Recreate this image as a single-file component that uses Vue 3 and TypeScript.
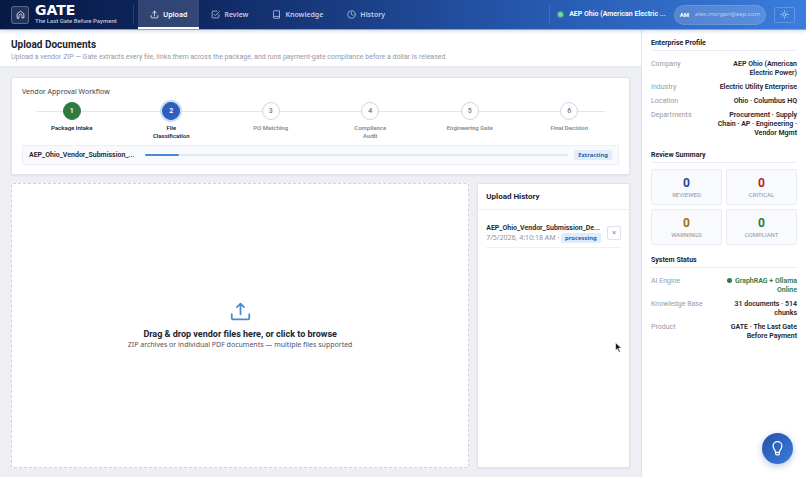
<script setup lang="ts">
import { ref } from 'vue'

interface Step { label: string; state: 'done' | 'active' | 'todo' }
interface Row { label: string; value: string; online?: boolean }

const steps: Step[] = [
  { label: 'Package Intake', state: 'done' },
  { label: 'File\nClassification', state: 'active' },
  { label: 'PO Matching', state: 'todo' },
  { label: 'Compliance\nAudit', state: 'todo' },
  { label: 'Engineering Gate', state: 'todo' },
  { label: 'Final Decision', state: 'todo' },
]

const tabs = ['Upload', 'Review', 'Knowledge', 'History']
const activeTab = ref('Upload')
const progress = ref(8)

const profile: Row[] = [
  { label: 'Company', value: 'AEP Ohio (American Electric Power)' },
  { label: 'Industry', value: 'Electric Utility Enterprise' },
  { label: 'Location', value: 'Ohio · Columbus HQ' },
  { label: 'Departments', value: 'Procurement · Supply Chain · AP · Engineering · Vendor Mgmt' },
]

const status: Row[] = [
  { label: 'AI Engine', value: 'GraphRAG + Ollama Online', online: true },
  { label: 'Knowledge Base', value: '31 documents · 514 chunks' },
  { label: 'Product', value: 'GATE · The Last Gate Before Payment' },
]

const summary = [
  { label: 'Reviewed', value: 0, tone: 'blue' },
  { label: 'Critical', value: 0, tone: 'red' },
  { label: 'Warnings', value: 0, tone: 'amber' },
  { label: 'Compliant', value: 0, tone: 'green' },
]
</script>

<template>
  <div class="app">
    <header class="topbar">
      <a class="brand" href="#">
        <span class="brand-mark">
          <svg viewBox="0 0 24 24" class="icon icon-home"><path d="M3 21V10L12 3l9 7v11h-5v-6a4 4 0 0 0-8 0v6z" /></svg>
        </span>
        <span class="brand-text">
          <span class="brand-name">GATE</span>
          <span class="brand-tag">The Last Gate Before Payment</span>
        </span>
      </a>
      <nav class="tabs" aria-label="Main">
        <button
          v-for="tab in tabs"
          :key="tab"
          type="button"
          class="tab"
          :class="{ active: tab === activeTab }"
          @click="activeTab = tab"
        >
          <svg viewBox="0 0 24 24" class="icon">
            <path v-if="tab === 'Upload'" d="M12 16V3M7 8l5-5 5 5M3 15v4a2 2 0 0 0 2 2h14a2 2 0 0 0 2-2v-4" />
            <path v-else-if="tab === 'Review'" d="M8 11l4 4L22 4M21 12v7a2 2 0 0 1-2 2H5a2 2 0 0 1-2-2V5a2 2 0 0 1 2-2h11" />
            <path v-else-if="tab === 'Knowledge'" d="M4 19V4a2 2 0 0 1 2-2h14v20H6a2 2 0 0 1-2-3a2 2 0 0 1 2-2h14" />
            <g v-else><circle cx="12" cy="12" r="10" /><path d="M12 6v6l4 2" /></g>
          </svg>
          {{ tab }}
        </button>
      </nav>
      <div class="account">
        <span class="org"><i class="dot"></i><span class="org-name">AEP Ohio (American Electric ...</span></span>
        <span class="user"><b class="initials">AM</b><span class="email">alex.morgan@aep.com</span></span>
        <button type="button" class="theme" aria-label="Toggle theme">
          <svg viewBox="0 0 24 24" class="icon"><circle cx="12" cy="12" r="4" /><path d="M12 2v2M12 20v2M2 12h2M20 12h2M5 5l1 1M18 18l1 1M5 19l1-1M18 6l1-1" /></svg>
        </button>
      </div>
    </header>

    <div class="body">
      <main class="main">
        <div class="page-head">
          <h1>Upload Documents</h1>
          <p>Upload a vendor ZIP — Gate extracts every file, links them across the package, and runs payment-gate compliance before a dollar is released</p>
        </div>

        <div class="content">
          <section class="card workflow">
            <h2>Vendor Approval Workflow</h2>
            <ol class="steps">
              <li v-for="(step, i) in steps" :key="step.label" class="step" :class="step.state">
                <span class="num">{{ i + 1 }}</span>
                <span class="step-label">{{ step.label }}</span>
              </li>
            </ol>
            <div class="job">
              <span class="job-name">AEP_Ohio_Vendor_Submission_...</span>
              <div class="track" role="progressbar" aria-label="Extraction" :aria-valuenow="progress">
                <div class="fill" :style="{ width: progress + '%' }"></div>
              </div>
              <span class="badge">Extracting</span>
            </div>
          </section>

          <div class="columns">
            <button type="button" class="dropzone">
              <svg viewBox="0 0 24 24" class="icon icon-drop"><path d="M12 15V3M8 7l4-4 4 4M2 15v4a2 2 0 0 0 2 2h16a2 2 0 0 0 2-2v-4" /></svg>
              <strong>Drag &amp; drop vendor files here, or click to browse</strong>
              <span>ZIP archives or individual PDF documents — multiple files supported</span>
            </button>

            <section class="card history">
              <h2>Upload History</h2>
              <div class="history-list">
                <div class="entry">
                  <div class="entry-text">
                    <div class="entry-name">AEP_Ohio_Vendor_Submission_De...</div>
                    <div class="entry-meta">7/5/2026, 4:10:18 AM · <span class="badge">processing</span></div>
                  </div>
                  <button type="button" class="remove" aria-label="Remove">×</button>
                </div>
              </div>
            </section>
          </div>
        </div>
      </main>

      <aside class="side">
        <section>
          <h3>Enterprise Profile</h3>
          <dl>
            <div v-for="row in profile" :key="row.label" class="row"><dt>{{ row.label }}</dt><dd>{{ row.value }}</dd></div>
          </dl>
        </section>
        <section>
          <h3>Review Summary</h3>
          <div class="stats">
            <div v-for="s in summary" :key="s.label" class="stat">
              <b :class="s.tone">{{ s.value }}</b>
              <span>{{ s.label }}</span>
            </div>
          </div>
        </section>
        <section>
          <h3>System Status</h3>
          <dl>
            <div v-for="row in status" :key="row.label" class="row">
              <dt>{{ row.label }}</dt>
              <dd :class="{ online: row.online }"><i v-if="row.online" class="led"></i>{{ row.value }}</dd>
            </div>
          </dl>
        </section>
      </aside>
    </div>

    <button type="button" class="assistant" aria-label="Open assistant">
      <svg viewBox="0 0 24 24" class="icon"><path d="M9 18c0-3-4-5-4-10a7 7 0 0 1 14 0c0 5-4 7-4 10zM9 18v2a2 2 0 0 0 2 2h2a2 2 0 0 0 2-2v-2" /></svg>
    </button>
    <svg class="pointer" viewBox="0 0 12 18" aria-hidden="true"><path d="M1 1v13l3-3 3 6 2-1-3-6h5z" /></svg>
  </div>
</template>

<style>
body {
  margin: 0;
}
</style>

<style scoped>
* {
  box-sizing: border-box;
}
.app {
  display: flex;
  flex-direction: column;
  min-height: 100vh;
  font-family: Roboto, "Noto Sans", sans-serif;
  font-size: 7px;
  line-height: 9px;
  color: #20242e;
  background: #eeeff5;
}
h1, h2, h3, p, ol, dl, dd {
  margin: 0;
  padding: 0;
}
button {
  font: inherit;
  color: inherit;
  padding: 0;
  cursor: pointer;
}
.tab,
.email,
.badge,
.workflow h2,
.dropzone span,
.entry-meta {
  font-family: "Noto Sans", sans-serif;
}
.icon {
  width: 9px;
  height: 9px;
  flex: none;
  fill: none;
  stroke: currentColor;
  stroke-width: 2;
  stroke-linecap: round;
  stroke-linejoin: round;
}

.topbar {
  position: relative;
  display: flex;
  height: 30px;
  flex: none;
  color: #fff;
  background: linear-gradient(90deg, #071a45 0%, #102862 25%, #2454a8 62%, #3b7ddd 100%);
  border-bottom: 1px solid #77a6ec;
  box-shadow: 0 1px 4px #1a3c8033;
}
.brand {
  display: flex;
  align-items: center;
  gap: 6px;
  width: 134px;
  margin-right: 4px;
  padding-left: 11px;
  color: inherit;
  text-decoration: none;
  background: linear-gradient(#ffffff22, #ffffff22) right center / 1px 20px no-repeat;
}
.brand-mark {
  display: grid;
  place-items: center;
  width: 18px;
  height: 18px;
  border: 1px solid #ffffff44;
  border-radius: 3px;
  background: #ffffff1c;
}
.brand-text {
  display: flex;
  flex-direction: column;
}
.brand-name {
  font: 900 14px/13px "DejaVu Sans", sans-serif;
}
.brand-tag {
  font-size: 6px;
  line-height: 8px;
  font-weight: 500;
  color: #bdc8df;
  white-space: nowrap;
}
.tabs {
  display: flex;
}
.tab {
  display: flex;
  align-items: center;
  gap: 4px;
  padding: 1px 12px 0;
  border: 0;
  border-bottom: 2px solid transparent;
  background: none;
  font-weight: 600;
  color: #c0cce8;
}
.tab.active {
  color: #fff;
  background: #ffffff26;
  border-bottom-color: #fff;
}
.account {
  display: flex;
  align-items: center;
  gap: 8px;
  margin-left: auto;
  padding-right: 11px;
}
.org {
  display: flex;
  align-items: center;
  gap: 6px;
  height: 20px;
  padding-left: 8px;
  border-left: 1px solid #ffffff1c;
  font-weight: 600;
}
.org-name {
  white-space: nowrap;
}
.dot {
  width: 5px;
  height: 5px;
  border-radius: 50%;
  background: #6bdd91;
  box-shadow: 0 0 3px #6bdd91;
}
.user {
  display: flex;
  align-items: center;
  gap: 6px;
  height: 20px;
  padding: 0 5px;
  border: 1px solid #ffffff1c;
  border-radius: 10px;
  background: #ffffff2b;
}
.initials {
  font-size: 6px;
}
.email {
  font-size: 6px;
  color: #b9d0f4;
}
.theme {
  display: grid;
  place-items: center;
  width: 21px;
  height: 16px;
  border: 1px solid #ffffff33;
  border-radius: 2px;
  background: none;
}
.theme .icon {
  color: #c4dafa;
}

.body {
  display: flex;
  flex: 1;
}
.main {
  display: flex;
  flex-direction: column;
  flex: 1;
  min-width: 0;
}
.page-head {
  padding: 9px 11px 4px;
  background: #fff;
  border-bottom: 1px solid #e6e8ef;
}
.page-head h1 {
  margin-bottom: 1px;
  font-size: 10px;
  line-height: 12px;
  font-weight: 700;
}
.page-head p {
  line-height: 10px;
  color: #9498a4;
}
.content {
  display: flex;
  flex-direction: column;
  gap: 8px;
  flex: 1;
  padding: 10px 11px 9px;
}
.card {
  background: #fff;
  border: 1px solid #e0e3eb;
  border-radius: 2px;
  box-shadow: 0 1px 2px #20306012;
}
.workflow {
  padding: 8px 10px 9px;
}
.workflow h2 {
  font-size: 7px;
  line-height: 12px;
  font-weight: 400;
  color: #3c404b;
}
.steps {
  display: flex;
  margin-top: 4px;
  list-style: none;
  background: linear-gradient(#e1e5ec, #e1e5ec) center 9px / calc(100% - 28px) 1px no-repeat;
}
.step {
  display: flex;
  flex-direction: column;
  align-items: center;
  gap: 4px;
  flex: 1;
  min-height: 40px;
}
.num {
  display: grid;
  place-items: center;
  width: 18px;
  height: 18px;
  border: 1px solid #d3d6de;
  border-radius: 50%;
  background: #fff;
  font-weight: 600;
  color: #7c808b;
}
.step-label {
  font-size: 6px;
  line-height: 8px;
  font-weight: 600;
  text-align: center;
  white-space: pre-line;
  color: #858994;
}
.done .num {
  color: #fff;
  background: #2f7a40;
  border-color: #2f7a40;
}
.active .num {
  color: #fff;
  background: #2b5fbc;
  border-color: #2b5fbc;
  box-shadow: 0 0 0 2px #c7dcf7;
}
.done .step-label,
.active .step-label {
  color: #22262f;
}
.job {
  display: flex;
  align-items: center;
  gap: 6px;
  height: 20px;
  margin-top: 3px;
  padding: 0 6px;
  border: 1px solid #eceff5;
  border-radius: 2px;
  background: #f8fafd;
}
.job-name {
  min-width: 106px;
  margin-right: 4px;
  white-space: nowrap;
  font-weight: 600;
}
.track {
  flex: 1;
  height: 2px;
  border-radius: 1px;
  background: #e3e9f1;
}
.fill {
  height: 100%;
  border-radius: 1px;
  background: #4a8ad4;
}
.badge {
  padding: 1px 4px;
  border-radius: 2px;
  background: #e0ecfb;
  font-size: 6px;
  line-height: 8px;
  font-weight: 600;
  color: #234b8b;
}

.columns {
  display: grid;
  grid-template-columns: minmax(0, 3fr) minmax(0, 1fr);
  gap: 8px;
  flex: 1;
}
.dropzone {
  display: flex;
  flex-direction: column;
  align-items: center;
  justify-content: center;
  border: 1px dashed #cdd1da;
  border-radius: 2px;
  background: #fff;
}
.icon-drop {
  width: 21px;
  height: 21px;
  margin-bottom: 7px;
  color: #4a8ad0;
}
.dropzone strong {
  font-size: 9px;
  line-height: 11px;
  font-weight: 700;
}
.dropzone span {
  line-height: 10px;
  color: #50545f;
}
.history h2 {
  padding: 7px 8px;
  border-bottom: 1px solid #eef0f5;
  font-size: 8px;
  line-height: 11px;
  font-weight: 700;
}
.history-list {
  padding: 8px;
}
.entry {
  display: flex;
  align-items: center;
  gap: 7px;
  padding: 5px 0 4px;
  border-bottom: 1px solid #eff1f5;
}
.entry-text {
  flex: 1;
  min-width: 0;
}
.entry-name {
  white-space: nowrap;
  line-height: 10px;
  font-weight: 600;
}
.entry-meta {
  line-height: 10px;
  white-space: nowrap;
  color: #8d919c;
}
.remove {
  width: 14px;
  height: 14px;
  border: 1px solid #dfe2e8;
  border-radius: 2px;
  background: #fff;
  color: #7c808b;
}

.side {
  display: flex;
  flex-direction: column;
  gap: 10px;
  width: 165px;
  padding: 8px 9px;
  background: #fff;
  border-left: 1px solid #dfe2ea;
}
.side h3 {
  padding-bottom: 2px;
  margin-bottom: 6px;
  border-bottom: 1px solid #eceef3;
  font-size: 7px;
  line-height: 10px;
  font-weight: 700;
}
.row {
  display: flex;
  justify-content: space-between;
  padding: 3px 0 2px;
}
.row dt {
  color: #959aa6;
}
.row dd {
  width: 84px;
  font-weight: 600;
  text-align: right;
}
.row .online {
  color: #2f7a46;
}
.led {
  display: inline-block;
  width: 5px;
  height: 5px;
  margin-right: 3px;
  border-radius: 50%;
  background: currentColor;
}
.stats {
  display: grid;
  grid-template-columns: 1fr 1fr;
  gap: 4px;
}
.stat {
  display: flex;
  flex-direction: column;
  align-items: center;
  justify-content: center;
  height: 36px;
  border: 1px solid #e9ecf3;
  border-radius: 2px;
  background: #f8fafd;
}
.stat b {
  font-size: 12px;
  line-height: 14px;
}
.stat span {
  font-size: 6px;
  line-height: 9px;
  text-transform: uppercase;
  color: #8f94a1;
}
.blue { color: #2348a0; }
.red { color: #b3262e; }
.amber { color: #a06d1b; }
.green { color: #2d7a42; }

.assistant {
  position: fixed;
  right: 13px;
  bottom: 13px;
  display: grid;
  place-items: center;
  width: 31px;
  height: 31px;
  border: 0;
  border-radius: 50%;
  color: #fff;
  background: linear-gradient(135deg, #2450a6, #3b7ddd);
  box-shadow: 0 2px 7px #2858ac55;
}
.assistant .icon {
  width: 15px;
  height: 15px;
}
.pointer {
  position: absolute;
  left: 615px;
  top: 342px;
  width: 7px;
  height: 11px;
  fill: #111;
  stroke: #fff;
  pointer-events: none;
}
</style>
